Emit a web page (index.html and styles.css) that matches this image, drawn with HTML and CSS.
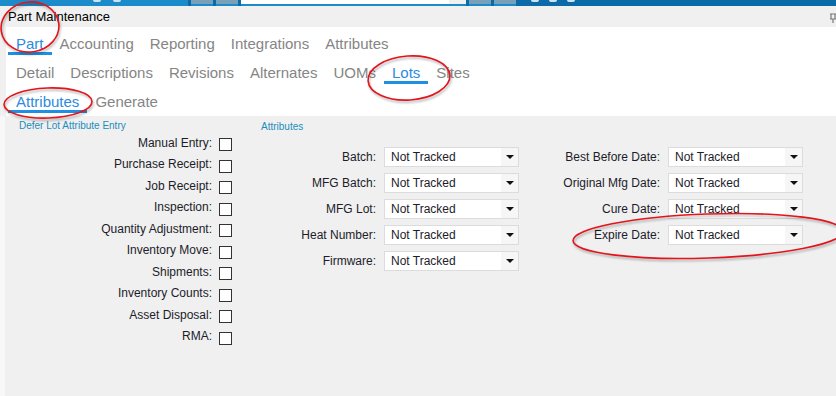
FILE: index.html
```html
<!DOCTYPE html>
<html lang="en">
<head>
    <meta charset="UTF-8">
    <meta name="viewport" content="width=device-width, initial-scale=1.0">
    <title>Part Maintenance</title>
    <link rel="stylesheet" href="styles.css">
</head>
<body>
    <!-- Toolbar (only its bottom edge is visible) -->
    <div class="toolbar">
        <div class="tb-left">
            <span class="tb-icon"></span>
            <span class="tb-icon"></span>
        </div>
        <span class="tb-btn"></span>
        <span class="tb-btn"></span>
        <div class="tb-search"><span class="tb-search-end"></span></div>
        <span class="tb-btn"></span>
        <span class="tb-btn"></span>
        <div class="tb-right">
            <span class="tb-icon"></span>
            <span class="tb-icon"></span>
            <span class="tb-icon"></span>
        </div>
    </div>

    <div class="titlebar">
        <span class="title">Part Maintenance</span>
        <svg class="pin" width="8" height="10" viewBox="0 0 8 10">
            <path d="M1 1h6M2 1v5h4V1M1 6h6M4 6v4" fill="none" stroke="#7a7a7a" stroke-width="1.2"/>
        </svg>
    </div>

    <div class="tabs-area">
        <nav class="tab-row first">
            <a class="tab active">Part</a>
            <a class="tab">Accounting</a>
            <a class="tab">Reporting</a>
            <a class="tab">Integrations</a>
            <a class="tab">Attributes</a>
        </nav>
        <nav class="tab-row">
            <a class="tab">Detail</a>
            <a class="tab">Descriptions</a>
            <a class="tab">Revisions</a>
            <a class="tab">Alternates</a>
            <a class="tab">UOMs</a>
            <a class="tab active">Lots</a>
            <a class="tab">Sites</a>
        </nav>
        <nav class="tab-row last">
            <a class="tab active">Attributes</a>
            <a class="tab">Generate</a>
        </nav>
    </div>

    <main class="content">
        <section class="defer-group">
            <div class="group-title">Defer Lot Attribute Entry</div>
            <div class="check-list">
                <label class="check-row"><span class="lbl">Manual Entry:</span><span class="box"></span></label>
                <label class="check-row"><span class="lbl">Purchase Receipt:</span><span class="box"></span></label>
                <label class="check-row"><span class="lbl">Job Receipt:</span><span class="box"></span></label>
                <label class="check-row"><span class="lbl">Inspection:</span><span class="box"></span></label>
                <label class="check-row"><span class="lbl">Quantity Adjustment:</span><span class="box"></span></label>
                <label class="check-row"><span class="lbl">Inventory Move:</span><span class="box"></span></label>
                <label class="check-row"><span class="lbl">Shipments:</span><span class="box"></span></label>
                <label class="check-row"><span class="lbl">Inventory Counts:</span><span class="box"></span></label>
                <label class="check-row"><span class="lbl">Asset Disposal:</span><span class="box"></span></label>
                <label class="check-row"><span class="lbl">RMA:</span><span class="box"></span></label>
            </div>
        </section>

        <section class="attr-group">
            <div class="group-title">Attributes</div>
            <div class="attr-grid">
                <span class="lbl">Batch:</span>
                <div class="combo"><span class="combo-text">Not Tracked</span><span class="combo-btn"></span></div>
                <span class="lbl">Best Before Date:</span>
                <div class="combo"><span class="combo-text">Not Tracked</span><span class="combo-btn"></span></div>

                <span class="lbl">MFG Batch:</span>
                <div class="combo"><span class="combo-text">Not Tracked</span><span class="combo-btn"></span></div>
                <span class="lbl">Original Mfg Date:</span>
                <div class="combo"><span class="combo-text">Not Tracked</span><span class="combo-btn"></span></div>

                <span class="lbl">MFG Lot:</span>
                <div class="combo"><span class="combo-text">Not Tracked</span><span class="combo-btn"></span></div>
                <span class="lbl">Cure Date:</span>
                <div class="combo"><span class="combo-text">Not Tracked</span><span class="combo-btn"></span></div>

                <span class="lbl">Heat Number:</span>
                <div class="combo"><span class="combo-text">Not Tracked</span><span class="combo-btn"></span></div>
                <span class="lbl">Expire Date:</span>
                <div class="combo"><span class="combo-text">Not Tracked</span><span class="combo-btn"></span></div>

                <span class="lbl">Firmware:</span>
                <div class="combo"><span class="combo-text">Not Tracked</span><span class="combo-btn"></span></div>
            </div>
        </section>
    </main>

    <!-- Red hand-drawn annotation rings -->
    <svg class="marks" width="836" height="396" viewBox="0 0 836 396">
        <g fill="none" stroke="#e3141b" stroke-width="1.6">
            <ellipse cx="30" cy="27" rx="29" ry="25" transform="rotate(-8 30 27)"/>
            <ellipse cx="409" cy="78" rx="41" ry="22" transform="rotate(-4 409 78)"/>
            <ellipse cx="48" cy="103" rx="44" ry="15" transform="rotate(-2 48 103)"/>
            <ellipse cx="708" cy="236" rx="135" ry="22" transform="rotate(-2 708 236)"/>
        </g>
    </svg>
</body>
</html>
```

FILE: styles.css
```css
body {
    margin: 0;
    width: 836px;
    height: 396px;
    overflow: hidden;
    background-color: #f0f0f0;
    font-family: "Liberation Sans", Arial, sans-serif;
    position: relative;
}

/* Toolbar Styles */
.toolbar {
    height: 6px;
    display: flex;
    background-color: #0b6aa8;
    overflow: hidden;
}

.tb-left {
    width: 188px;
    background-color: #1c8bc9;
    display: flex;
    gap: 12px;
    padding-left: 93px;
    box-sizing: border-box;
    margin-right: 3px;
}

.tb-icon {
    width: 8px;
    height: 2px;
    background-color: #cfe3ef;
    border-radius: 0 0 3px 3px;
}

.tb-btn {
    width: 22px;
    margin-right: 3px;
    background-color: #78a0b9;
    border-bottom: 2px solid #1c8bc9;
}

.tb-search {
    width: 225px;
    margin-right: 3px;
    background-color: #fff;
    border-bottom: 2px solid #1c8bc9;
    display: flex;
    justify-content: flex-end;
}

.tb-search-end {
    width: 17px;
    background-color: #f0f0f0;
}

.tb-right {
    flex: 1;
    display: flex;
    gap: 10px;
    padding-left: 12px;
}

/* Title Bar Styles */
.titlebar {
    height: 21px;
    display: flex;
    align-items: center;
    justify-content: space-between;
    padding: 0 0 0 8px;
}

.title {
    font-size: 13px;
    color: #000;
}

.pin {
    margin-right: -1px;
    margin-top: 2px;
}

/* Tab Styles */
.tabs-area {
    margin-left: 6px;
    background-color: #fff;
    padding-left: 2px;
    height: 89px;
}

.tab-row {
    display: flex;
    height: 30px;
}

.tab-row.last {
    height: 29px;
}

.tab {
    display: block;
    padding: 7px 8px 0;
    line-height: 17px;
    height: 17px;
    font-size: 15px;
    color: #858585;
    border-bottom: 3px solid transparent;
}

.tab-row.first .tab {
    padding-top: 8px;
}

.tab-row.last .tab {
    padding-top: 6px;
}

.tab.active {
    color: #2a8be0;
    border-bottom-color: #1e8fe3;
}

/* Content Styles */
.content {
    display: flex;
    height: 280px;
    border-left: 5px solid #f8f8f8;
    padding-top: 4px;
    box-sizing: border-box;
}

.group-title {
    font-size: 10px;
    line-height: 12px;
    color: #1b8dbd;
    white-space: nowrap;
}

.lbl {
    font-size: 12px;
    color: #1c1c2a;
    text-align: right;
    white-space: nowrap;
}

/* Defer checkboxes */
.defer-group {
    margin-left: 14px;
    width: 213px;
}

.check-list {
    margin-top: 2px;
}

.check-row {
    display: grid;
    grid-template-columns: 193px 13px;
    column-gap: 7px;
    align-items: center;
    height: 21.5px;
}

.check-row .lbl {
    padding-bottom: 4px;
}

.box {
    width: 11px;
    height: 11px;
    border: 1px solid #333;
    background-color: #fff;
}

/* Attribute combos */
.attr-group {
    margin-left: 29px;
    padding-top: 1px;
}

.attr-grid {
    margin-top: 14px;
    display: grid;
    grid-template-columns: 123px 135px 149px 135px;
    grid-auto-rows: 20px;
    row-gap: 6px;
    align-items: center;
}

.attr-grid .lbl {
    padding-right: 8px;
}

.combo {
    height: 20px;
    box-sizing: border-box;
    border: 1px solid #dcdcdc;
    background-color: #fff;
    display: flex;
}

.combo-text {
    flex: 1;
    font-size: 12px;
    line-height: 18px;
    padding-left: 6px;
    color: #1c1c2a;
}

.combo-btn {
    width: 17px;
    background-color: #f6f6f6;
    position: relative;
}

.combo-btn::after {
    content: "";
    position: absolute;
    left: 5px;
    top: 7px;
    border-left: 4px solid transparent;
    border-right: 4px solid transparent;
    border-top: 4px solid #111;
}

/* Annotation overlay */
.marks {
    position: absolute;
    top: 0;
    left: 0;
    pointer-events: none;
    filter: drop-shadow(1px 2px 1px rgba(0, 0, 0, 0.3));
}
```
